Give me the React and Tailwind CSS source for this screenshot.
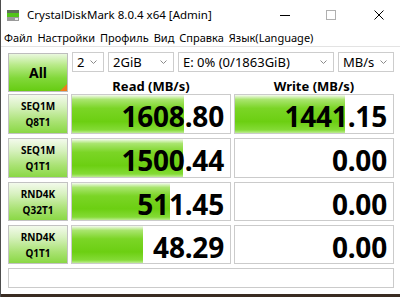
import React from 'react'

const font = { fontFamily: '"Noto Sans", "Open Sans", sans-serif' }

const rows = [
  { a: 'SEQ1M', b: 'Q8T1', read: '1608.80', readBar: 112, write: '1441.15', writeBar: 110 },
  { a: 'SEQ1M', b: 'Q1T1', read: '1500.44', readBar: 111, write: '0.00', writeBar: 0 },
  { a: 'RND4K', b: 'Q32T1', read: '511.45', readBar: 98, write: '0.00', writeBar: 0 },
  { a: 'RND4K', b: 'Q1T1', read: '48.29', readBar: 71, write: '0.00', writeBar: 0 },
]

const barBg =
  'bg-[linear-gradient(to_bottom,#f4fbee_0%,#a9e56e_12%,#7bd526_35%,#6ccf12_70%,#84db36_92%,#bdec92_100%)]'

function Chevron() {
  return (
    <svg width="7" height="4" viewBox="0 0 7 4" className="shrink-0">
      <polyline points="0.5,0.5 3.5,3.5 6.5,0.5" fill="none" stroke="#8a8a8a" strokeWidth="1" />
    </svg>
  )
}

function Select({ w, text }) {
  return (
    <div
      className={`${w} h-[20px] border border-[#cdcdcd] bg-white flex items-center justify-between pl-[4px] pr-[6px] text-[13px] text-black`}
    >
      <span className="leading-none">{text}</span>
      <Chevron />
    </div>
  )
}

function Cell({ value, bar, h }) {
  return (
    <div className={`relative ${h} border border-[#cbcbcb] bg-white overflow-hidden`}>
      {bar > 0 && (
        <div className={`absolute left-0 top-0 bottom-0 ${barBg}`} style={{ width: bar }} />
      )}
      <div className="relative h-full flex items-center justify-end pr-[6px] pt-[4px]">
        <span className="text-[28px] font-bold leading-none text-black tracking-[-0.2px]">{value}</span>
      </div>
    </div>
  )
}

export default function App() {
  const heights = ['h-[40px]', 'h-[40px]', 'h-[39px]', 'h-[39px]']
  return (
    <div className="w-[400px] h-[297px] bg-white flex flex-col overflow-hidden border-l border-[#4d4d4d]" style={font}>
      {/* Title bar */}
      <div className="h-[30px] flex items-center shrink-0">
        <svg width="12" height="11" viewBox="0 0 12 11" className="ml-[6px]">
          <rect x="0" y="0" width="12" height="3" fill="#5f6f5a" />
          <rect x="0" y="3" width="12" height="4" fill="#53c41a" />
          <rect x="0" y="7" width="12" height="4" fill="#9a9a9a" />
          <rect x="8" y="8" width="3" height="2" fill="#e8e8e8" />
        </svg>
        <span className="ml-[8px] text-[11.5px] text-black">CrystalDiskMark 8.0.4 x64 [Admin]</span>
        <div className="ml-auto flex items-center">
          <div className="w-[46px] flex justify-center">
            <div className="w-[10px] h-px bg-black" />
          </div>
          <div className="w-[46px] flex justify-center">
            <div className="w-[10px] h-[10px] border border-[#b0b0b0]" />
          </div>
          <div className="w-[46px] flex justify-center pl-[4px]">
            <svg width="10" height="10" viewBox="0 0 10 10">
              <path d="M0.5 0.5 L9.5 9.5 M9.5 0.5 L0.5 9.5" stroke="#000" strokeWidth="1" />
            </svg>
          </div>
        </div>
      </div>

      {/* Menu */}
      <div className="h-[17px] flex items-center gap-[5px] pl-[3px] text-[11px] text-black border-b border-[#e3e3e3] shrink-0">
        <span>Файл</span>
        <span>Настройки</span>
        <span>Профиль</span>
        <span>Вид</span>
        <span>Справка</span>
        <span>Язык(Language)</span>
      </div>

      {/* Main */}
      <div className="pl-[7px] pt-[5px] flex flex-col">
        <div className="grid grid-cols-[60px_160px_160px] gap-x-[3px]">
          <div className="relative h-[39px] mt-px border border-[#bdbdbd] bg-[linear-gradient(to_bottom,#eaf8de_0%,#b8ea88_30%,#82d83a_65%,#66cc12_100%)] flex items-center justify-center overflow-hidden">
            <span className="text-[14px] font-bold text-black">All</span>
            <div className="absolute right-0 bottom-0 w-0 h-0 border-l-[7px] border-l-transparent border-b-[7px] border-b-[#f07b1c]" />
          </div>
          <div className="col-span-2 flex flex-col">
            <div className="flex items-center gap-[4px] pl-px">
              <Select w="w-[32px]" text="2" />
              <Select w="w-[66px]" text="2GiB" />
              <Select w="w-[156px]" text="E: 0% (0/1863GiB)" />
              <Select w="w-[56px]" text="MB/s" />
            </div>
            <div className="grid grid-cols-2 gap-x-[3px] h-[20px] pt-[5px] items-center text-[13px] font-bold text-black">
              <div className="text-center">Read (MB/s)</div>
              <div className="text-center">Write (MB/s)</div>
            </div>
          </div>
        </div>

        <div className="mt-[2px] flex flex-col gap-[4px]">
          {rows.map((r, i) => (
            <div key={i} className="grid grid-cols-[60px_160px_160px] gap-x-[3px]">
              <div
                className={`${heights[i]} border border-[#c2c2c2] bg-[linear-gradient(to_bottom,#f3faec_0%,#d7f1bf_30%,#a9e273_70%,#8ad845_100%)] flex flex-col items-center justify-center text-[10px] font-bold leading-[16px] text-black`}
              >
                <span>{r.a}</span>
                <span>{r.b}</span>
              </div>
              <Cell value={r.read} bar={r.readBar} h={heights[i]} />
              <Cell value={r.write} bar={r.writeBar} h={heights[i]} />
            </div>
          ))}
        </div>

        <div className="mt-[4px] w-[386px] h-[20px] border border-[#cbcbcb] bg-white" />
      </div>
      <div className="mt-auto h-[3px] bg-[#3a2c22] shrink-0" />
    </div>
  )
}
